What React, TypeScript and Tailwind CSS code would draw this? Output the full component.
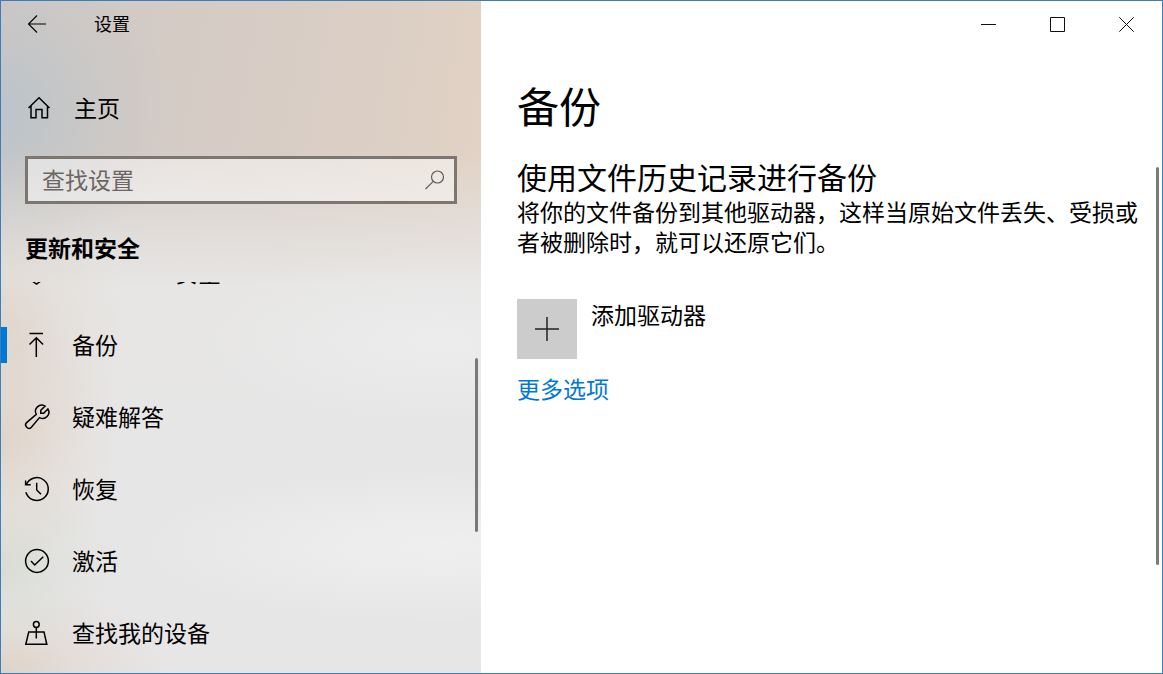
import type { ReactNode } from "react";

function Icon({ children, width = 1.5 }: { children: ReactNode; width?: number }) {
  return (
    <svg
      viewBox="0 0 24 24"
      className="size-6 shrink-0 overflow-visible"
      fill="none"
      stroke="currentColor"
      strokeWidth={width}
      aria-hidden="true"
    >
      {children}
    </svg>
  );
}

const navItems = [
  {
    label: "Windows 安全",
    icon: <path d="M11.500 0c3 2 6 3 10 3v6c0 6-4 10.500-10 14C5.500 19.500 1.500 15 1.500 9V3c4 0 7-1 10-3z" />,
  },
  {
    label: "备份",
    active: true,
    icon: <path d="M4.500.5H18M11.300 24V5M4.500 11.500l6.800-6.800 6.800 6.800" />,
  },
  {
    label: "疑难解答",
    icon: (
      <path d="M20 1.100 15.800 5.300V8.200H18.700L22.900 4A6.200 6.200 0 0 1 14.500 12.600L6.400 22.200A3.300 3.300 0 0 1 1.600 17.600L11.300 9.400A6.200 6.200 0 0 1 20 1.100Z" />
    ),
  },
  {
    label: "恢复",
    icon: <path d="M1.300 7.700A11.400 11.400 0 1 1 .9 15.200M.6 3.500V7.700H5.700M11.700 5.700V13L16 17.300" />,
  },
  {
    label: "激活",
    icon: (
      <>
        <circle cx="12" cy="12" r="11.400" />
        <path d="M6 12l3.700 4 8.600-8.300" />
      </>
    ),
  },
  {
    label: "查找我的设备",
    icon: (
      <>
        <circle cx="11.300" cy="3.500" r="2.900" />
        <path d="M11.300 6.400V17.500M3.700 11H19L21.800 23.300H.8Z" />
      </>
    ),
  },
];

function Sidebar() {
  return (
    <aside className="relative flex w-[480px] shrink-0 flex-col overflow-hidden bg-[radial-gradient(ellipse_170px_160px_at_0px_110px,#b9c3cadd,#b9c3ca55_50%,#b9c3ca00),radial-gradient(ellipse_130px_150px_at_0px_330px,#ddd0c4bb,#ddd0c444_50%,#ddd0c400),radial-gradient(ellipse_120px_130px_at_0px_440px,#dfd1c4cc,#dfd1c455_50%,#dfd1c400),radial-gradient(ellipse_120px_100px_at_0px_565px,#d7dcd3ee,#d7dcd355_50%,#d7dcd300),radial-gradient(ellipse_180px_90px_at_0px_672px,#dfd0c5ee,#dfd0c555_50%,#dfd0c500),radial-gradient(ellipse_260px_90px_at_440px_340px,#ececec,#ececec00),radial-gradient(ellipse_320px_80px_at_440px_545px,#efefef,#efefef00),linear-gradient(to_bottom,#e7e6e700_150px,#e4e1de99_210px,#e7e6e5_285px,#e7e6e7_100%),linear-gradient(100deg,#cdc8c5,#d4cbc5_30%,#dacec5_60%,#e0d1c4_80%,#e3d5c6)]">
      <header className="flex h-[47px] shrink-0 items-center pb-0.5">
        <button type="button" aria-label="返回" className="flex h-full w-[72px] items-center justify-center">
          <Icon width={1.1}>
            <path d="M3.500 12H21M12 3.500 3.500 12 12 20.500" />
          </Icon>
        </button>
        <span className="ml-[21px] pb-0.5 text-[18px]">设置</span>
      </header>

      <a href="#home" className="mt-[36px] flex h-12 shrink-0 items-center gap-[23px] pl-[26px]">
        <Icon>
          <path d="M1.500 12 12 1.800 22.500 12M4 10V21.800H9V13.500H15V21.800H20.500V10" />
        </Icon>
        <span className="pb-0.5">主页</span>
      </a>

      <label className="mx-6 mt-6 flex h-12 shrink-0 items-center border-3 border-[#7d756f] bg-white/45 pr-1.5 pl-[14px] text-[#625d59]">
        <input
          type="text"
          aria-label="查找设置"
          placeholder="查找设置"
          className="min-w-0 flex-1 bg-transparent pb-[3px] outline-none placeholder:text-[#6b6662]"
        />
        <Icon width={1.2}>
          <circle cx="13.500" cy="9" r="6" />
          <path d="M9.200 13.300 1.500 21" />
        </Icon>
      </label>

      <h2 className="mt-[25px] h-9 shrink-0 pl-6 leading-9 font-bold">更新和安全</h2>

      <nav className="mt-[17px] min-h-0 flex-1 overflow-hidden">
        <ul className="-mt-[45px]">
          {navItems.map((item) => (
            <li key={item.label}>
              <a href="#item" className="flex h-[72px] items-center">
                <span className={item.active ? "h-9 w-1.5 bg-[#0078d7]" : "h-9 w-1.5"} />
                <span className="flex items-center gap-[23px] pl-[18px]">
                  <Icon>{item.icon}</Icon>
                  <span className="pb-[3px]">{item.label}</span>
                </span>
              </a>
            </li>
          ))}
        </ul>
      </nav>
      <div className="absolute top-[357px] right-[3px] h-[174px] w-[3px] rounded-sm bg-[#7a7878]" />
    </aside>
  );
}

function WindowButton({ label, children }: { label: string; children: ReactNode }) {
  return (
    <button type="button" aria-label={label} className="flex h-full w-[69px] items-center justify-center">
      <svg viewBox="0 0 15 15" className="size-[15px]" fill="none" stroke="#111" strokeWidth="1" aria-hidden="true">
        {children}
      </svg>
    </button>
  );
}

export default function App() {
  return (
    <div className="flex h-screen w-full border border-[#3b7fb8] bg-white font-['Noto_Sans_CJK_SC',sans-serif] text-[23px] leading-[30px] font-normal text-black">
      <Sidebar />
      <main className="relative flex min-w-0 flex-1 flex-col">
        <div className="flex h-[47px] shrink-0 justify-end pr-px">
          <WindowButton label="最小化">
            <path d="M0 7.500H15" />
          </WindowButton>
          <WindowButton label="最大化">
            <path d="M.5.5H14.500V14.500H.5Z" />
          </WindowButton>
          <WindowButton label="关闭">
            <path d="M.3.3 14.700 14.700M14.700.3.3 14.700" />
          </WindowButton>
        </div>
        <div className="flex flex-col items-start pr-4 pl-9">
          <h1 className="mt-[27px] text-[42px] leading-[60px]">备份</h1>
          <h2 className="mt-[21px] text-[30px] leading-[40px]">使用文件历史记录进行备份</h2>
          <p>将你的文件备份到其他驱动器，这样当原始文件丢失、受损或者被删除时，就可以还原它们。</p>
          <button type="button" className="mt-[43px] flex items-start gap-[14px]">
            <span className="flex size-[60px] items-center justify-center bg-[#ccc] text-[#222]">
              <Icon>
                <path d="M0 12H24M12 0V24" />
              </Icon>
            </span>
            <span>添加驱动器</span>
          </button>
          <a href="#more" className="mt-3.5 text-[#0078d7]">
            更多选项
          </a>
        </div>
        <div className="absolute top-[166px] right-[3px] h-[398px] w-[3px] rounded-sm bg-[#7a7a7a]" />
      </main>
    </div>
  );
}
